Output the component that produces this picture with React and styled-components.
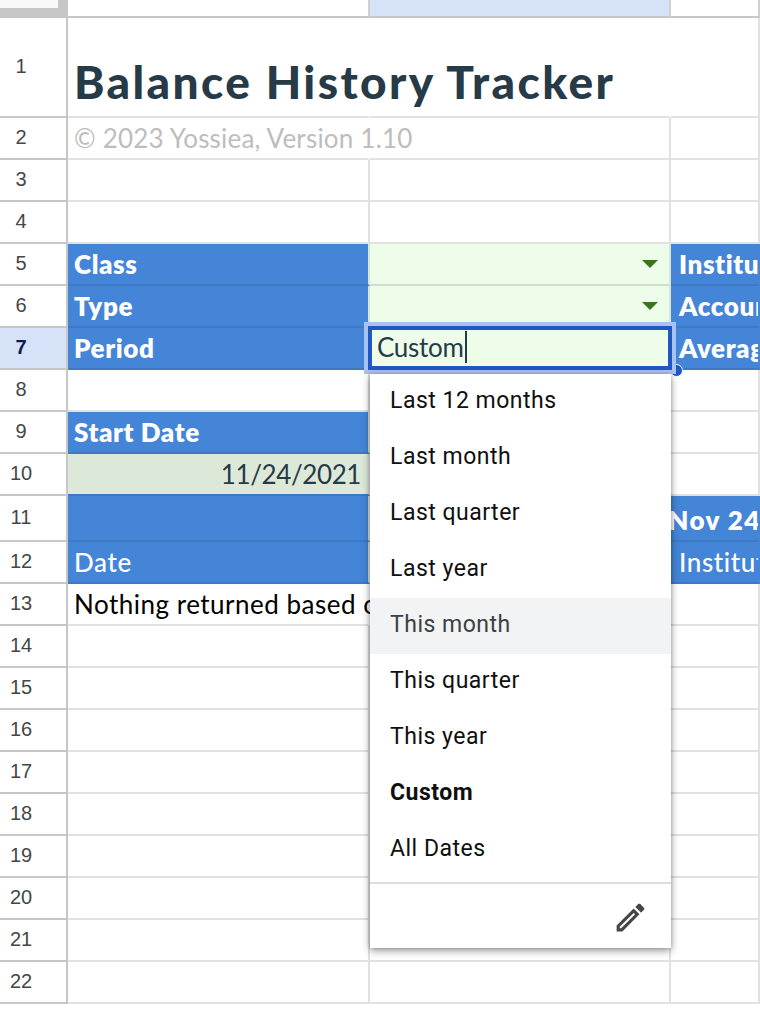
import React from "react";
import styled, { createGlobalStyle } from "styled-components";

const Global = createGlobalStyle`
  html, body { margin: 0; padding: 0; background: #fff; overflow: hidden; }
  * { box-sizing: border-box; }
`;

const Page = styled.div`
  position: relative;
  width: 760px;
  height: 1012px;
  overflow: hidden;
  font-family: "Lato", "Open Sans", sans-serif;
`;

const Row = styled.div`
  display: grid;
  grid-template-columns: 68px 302px 301px 89px;
  height: ${(p) => p.$h}px;
`;

const Corner = styled.div`
  background: #c7c7c7;
  padding: 0 10px 10px 0;
`;

const CornerInner = styled.div`
  height: 100%;
  background: #f8f9fa;
`;

const ColHead = styled.div`
  background: ${(p) => (p.$selected ? "#d6e2f8" : "#fff")};
  border-bottom: 2px solid #c7c7c7;
  border-right: 2px solid #d0d0d0;
`;

const RowHead = styled.div`
  display: flex;
  align-items: center;
  justify-content: center;
  padding: 0 24px 2px 0;
  font: ${(p) => (p.$selected ? 700 : 400)} 20px "Liberation Sans", sans-serif;
  color: ${(p) => (p.$selected ? "#0b1f4e" : "#444746")};
  background: ${(p) => (p.$selected ? "#d6e2f8" : "#fff")};
  border-right: 2px solid #c7c7c7;
  border-bottom: 2px solid #c7c7c7;
`;

const Cell = styled.div`
  display: flex;
  align-items: flex-end;
  justify-content: ${(p) => (p.$right ? "flex-end" : "flex-start")};
  min-width: 0;
  padding: 0 7px 4px 6px;
  white-space: nowrap;
  border-right: 2px solid ${(p) => (p.$noLine ? "transparent" : "#e1e1e1")};
  border-bottom: 2px solid #e1e1e1;
  font-size: 26px;
  line-height: 32px;
  color: #000;
`;

const Title = styled(Cell)`
  border-right-color: transparent;
  padding: 0 0 6px 6px;
  font-size: 46px;
  line-height: 56px;
  font-weight: 900;
  letter-spacing: 2.4px;
  color: #263a47;
`;

const Subtitle = styled(Cell)`
  border-right-color: transparent;
  font-size: 26px;
  letter-spacing: 0.2px;
  color: #bdbdbd;
`;

const BlueCell = styled(Cell)`
  background: #4485d8;
  background-clip: padding-box;
  color: #fff;
  font-weight: ${(p) => (p.$regular ? 500 : 800)};
  letter-spacing: 0.6px;
  border-right-color: #d9e6d5;
  border-bottom-color: #3e79c6;
`;

const Clip = styled(BlueCell)`
  overflow: hidden;
  padding-left: 8px;
  border-right-color: #4485d8;
  background-clip: border-box;
`;

const DateHead = styled(Clip)`
  padding: 0 0 4px 0;
  justify-content: center;
  letter-spacing: 1.4px;
`;

const InputCell = styled(Cell)`
  position: relative;
  background: #eefdea;
  border-right-color: #d9e6d5;
  border-bottom-color: #d0dfcc;
`;

const Arrow = styled.span`
  position: absolute;
  right: 11px;
  top: 16px;
  width: 0;
  height: 0;
  border-left: 8px solid transparent;
  border-right: 8px solid transparent;
  border-top: 8px solid #38761d;
`;

const DateCell = styled(Cell)`
  background: #dde9d8;
  background-clip: padding-box;
  color: #263a47;
  letter-spacing: -0.4px;
  border-bottom-color: #3e79c6;
`;

const Message = styled(Cell)`
  overflow: visible;
  letter-spacing: 0.5px;
  border-right-color: transparent;
`;

const EditorFrame = styled.div`
  position: absolute;
  left: 364px;
  top: 322px;
  width: 312px;
  height: 52px;
  border: 4px solid #a8c3f2;
  background: #1f57c3;
  padding: 4px;
`;

const EditorField = styled.div`
  height: 100%;
  display: flex;
  align-items: center;
  padding: 0 0 2px 5px;
  background: #eefdea;
  font-size: 26px;
  letter-spacing: -0.3px;
  color: #263a47;
`;

const Caret = styled.span`
  display: inline-block;
  width: 2px;
  height: 32px;
  margin-left: 1px;
  background: #263a47;
`;

const Handle = styled.span`
  position: absolute;
  left: 670px;
  top: 364px;
  width: 13px;
  height: 13px;
  border-radius: 50%;
  background: #1f57c3;
  border: 1px solid #fff;
`;

const Menu = styled.div`
  position: absolute;
  left: 370px;
  top: 374px;
  width: 301px;
  height: 574px;
  background: #fff;
  box-shadow: 0 3px 8px rgba(0, 0, 0, 0.38), 0 0 4px rgba(0, 0, 0, 0.2);
  display: flex;
  flex-direction: column;
`;

const MenuItem = styled.div`
  flex: 0 0 56px;
  display: flex;
  align-items: center;
  padding: 0 0 4px 20px;
  font: ${(p) => (p.$bold ? 700 : 400)} 23px "Roboto", sans-serif;
  letter-spacing: 0.5px;
  color: ${(p) => (p.$hover ? "#3c4043" : "#0f0f0f")};
  background: ${(p) => (p.$hover ? "#f1f3f4" : "transparent")};
`;

const MenuFooter = styled.div`
  flex: 1;
  margin-top: 4px;
  border-top: 2px solid #dadce0;
  display: flex;
  justify-content: flex-end;
  align-items: flex-start;
  padding: 15px 22px 0 0;
  color: #444746;
`;

const rowsAfter = [14, 15, 16, 17, 18, 19, 20, 21, 22];
const items = ["Last 12 months", "Last month", "Last quarter", "Last year", "This month", "This quarter", "This year", "Custom", "All Dates"];

const Plain = ({ n }) => (
  <Row $h={42}>
    <RowHead>{n}</RowHead>
    <Cell />
    <Cell />
    <Cell />
  </Row>
);

export default function App() {
  return (
    <>
      <Global />
      <Page>
        <Row $h={18}>
          <Corner><CornerInner /></Corner>
          <ColHead />
          <ColHead $selected />
          <ColHead />
        </Row>
        <Row $h={100}>
          <RowHead>1</RowHead>
          <Title>Balance History Tracker</Title>
          <Cell $noLine />
          <Cell />
        </Row>
        <Row $h={42}>
          <RowHead>2</RowHead>
          <Subtitle>© 2023 Yossiea, Version 1.10</Subtitle>
          <Cell />
          <Cell />
        </Row>
        <Plain n={3} />
        <Plain n={4} />
        <Row $h={42}>
          <RowHead>5</RowHead>
          <BlueCell>Class</BlueCell>
          <InputCell><Arrow /></InputCell>
          <Clip>Institution</Clip>
        </Row>
        <Row $h={42}>
          <RowHead>6</RowHead>
          <BlueCell>Type</BlueCell>
          <InputCell><Arrow /></InputCell>
          <Clip>Account</Clip>
        </Row>
        <Row $h={42}>
          <RowHead $selected>7</RowHead>
          <BlueCell>Period</BlueCell>
          <InputCell />
          <Clip>Average</Clip>
        </Row>
        <Plain n={8} />
        <Row $h={42}>
          <RowHead>9</RowHead>
          <BlueCell>Start Date</BlueCell>
          <Cell />
          <Cell />
        </Row>
        <Row $h={42}>
          <RowHead>10</RowHead>
          <DateCell $right>11/24/2021</DateCell>
          <Cell />
          <Cell />
        </Row>
        <Row $h={46}>
          <RowHead>11</RowHead>
          <BlueCell />
          <BlueCell />
          <DateHead>Nov 24</DateHead>
        </Row>
        <Row $h={42}>
          <RowHead>12</RowHead>
          <BlueCell $regular>Date</BlueCell>
          <BlueCell />
          <Clip $regular>Institution</Clip>
        </Row>
        <Row $h={42}>
          <RowHead>13</RowHead>
          <Message>Nothing returned based on your selection</Message>
          <Cell />
          <Cell />
        </Row>
        {rowsAfter.map((n) => <Plain key={n} n={n} />)}
        <Handle />
        <EditorFrame>
          <EditorField>Custom<Caret /></EditorField>
        </EditorFrame>
        <Menu>
          {items.map((t) => (
            <MenuItem key={t} $bold={t === "Custom"} $hover={t === "This month"}>{t}</MenuItem>
          ))}
          <MenuFooter>
            <svg width="37" height="37" viewBox="0 0 24 24" fill="currentColor">
              <path d="M3 17.25V21h3.75L17.81 9.94l-3.75-3.75L3 17.25zM5.92 19H5v-.92l9.06-9.06.92.92L5.92 19zM20.71 5.63l-2.34-2.34c-.2-.2-.45-.29-.71-.29s-.51.1-.7.29l-1.83 1.83 3.75 3.75 1.83-1.83c.39-.39.39-1.02 0-1.41z" />
            </svg>
          </MenuFooter>
        </Menu>
      </Page>
    </>
  );
}
